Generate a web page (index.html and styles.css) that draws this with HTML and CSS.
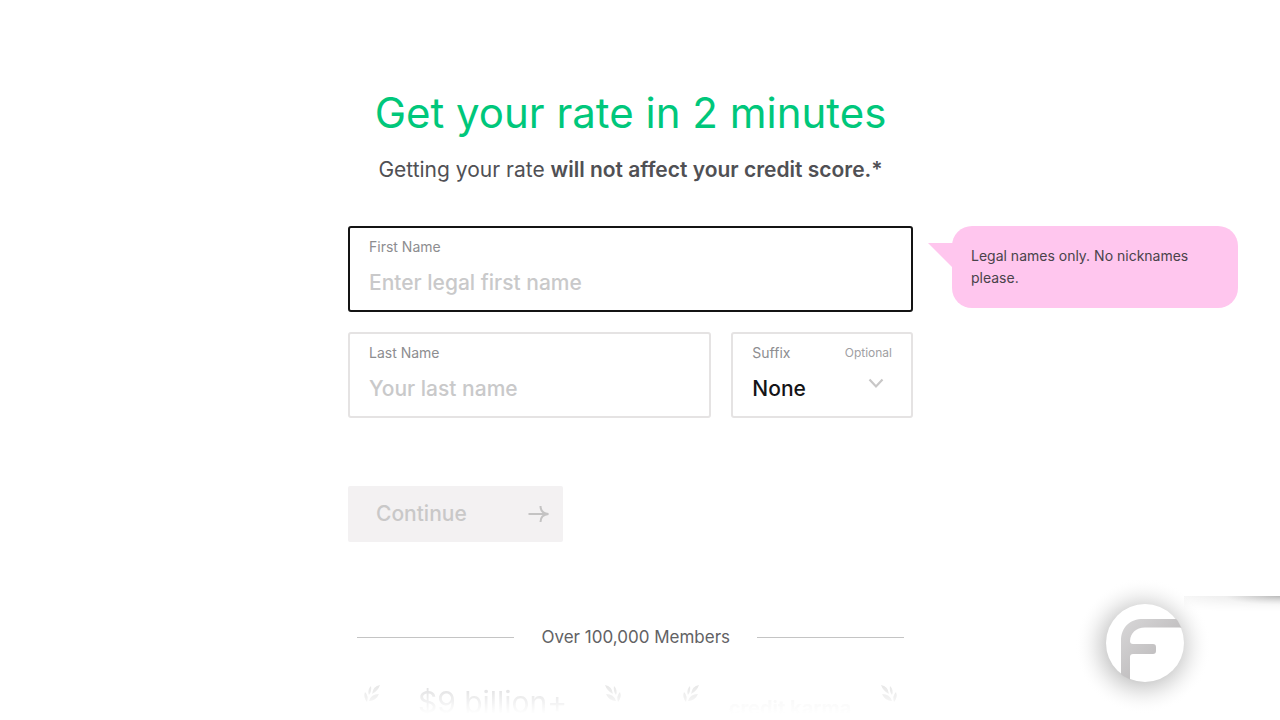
FILE: index.html
```html
<!DOCTYPE html>
<html lang="en">
<head>
<meta charset="utf-8">
<meta name="viewport" content="width=device-width, initial-scale=1">
<title>Get your rate in 2 minutes</title>
<link rel="stylesheet" href="styles.css">
</head>
<body>
<main class="page">
  <header class="intro">
    <h1 class="title">Get your rate in 2 minutes</h1>
    <p class="subtitle">Getting your rate <strong>will not affect your credit score.*</strong></p>
  </header>

  <form class="form">
    <div class="field field-active">
      <label class="field-label" for="first-name">First Name</label>
      <input class="field-input" id="first-name" type="text" placeholder="Enter legal first name">
    </div>
    <div class="row">
      <div class="field">
        <label class="field-label" for="last-name">Last Name</label>
        <input class="field-input" id="last-name" type="text" placeholder="Your last name">
      </div>
      <div class="field field-suffix">
        <div class="label-row">
          <label class="field-label" for="suffix">Suffix</label>
          <span class="optional">Optional</span>
        </div>
        <div class="select-row">
          <select class="field-input field-select" id="suffix"><option>None</option></select>
          <svg class="chevron" viewBox="0 0 16 12" aria-hidden="true"><path d="M1.5 2.500 8 9.500 14.500 2.500"/></svg>
        </div>
      </div>
    </div>
    <button class="continue" type="button" disabled>
      <span>Continue</span>
      <svg class="arrow" viewBox="0 0 22 18" aria-hidden="true"><path d="M.5 9H20.500M12.500 1C12.500 5 15 8.500 20.500 9 15 9.500 12.500 13 12.500 17"/></svg>
    </button>
  </form>

  <aside class="bubble">Legal names only. No nicknames please.</aside>

  <section class="members">
    <h2 class="members-title">Over 100,000 Members</h2>
    <div class="stats">
      <div class="stat">
        <svg class="laurel" viewBox="0 0 18 20" aria-hidden="true"><path d="M17 1Q10 2 9 10 15 7 17 1M8 2Q4 6 6 11 9 7 8 2M2 8Q0 13 4 18 6 12 2 8M16 10Q8 10 6 17 13 17 16 10"/></svg>
        <span class="stat-value">$9 billion+</span>
        <svg class="laurel laurel-end" viewBox="0 0 18 20" aria-hidden="true"><path d="M17 1Q10 2 9 10 15 7 17 1M8 2Q4 6 6 11 9 7 8 2M2 8Q0 13 4 18 6 12 2 8M16 10Q8 10 6 17 13 17 16 10"/></svg>
      </div>
      <div class="stat">
        <svg class="laurel" viewBox="0 0 18 20" aria-hidden="true"><path d="M17 1Q10 2 9 10 15 7 17 1M8 2Q4 6 6 11 9 7 8 2M2 8Q0 13 4 18 6 12 2 8M16 10Q8 10 6 17 13 17 16 10"/></svg>
        <span class="stat-partner">credit karma</span>
        <svg class="laurel laurel-end" viewBox="0 0 18 20" aria-hidden="true"><path d="M17 1Q10 2 9 10 15 7 17 1M8 2Q4 6 6 11 9 7 8 2M2 8Q0 13 4 18 6 12 2 8M16 10Q8 10 6 17 13 17 16 10"/></svg>
      </div>
    </div>
  </section>
</main>

<div class="edge-shadow"></div>
<svg class="badge" viewBox="0 0 140 140" role="img" aria-label="F logo">
  <defs>
    <radialGradient id="halo">
      <stop offset="0" stop-color="#aaa" stop-opacity=".8"/>
      <stop offset=".52" stop-color="#aaa" stop-opacity=".55"/>
      <stop offset=".75" stop-color="#bbb" stop-opacity=".2"/>
      <stop offset="1" stop-color="#fff" stop-opacity="0"/>
    </radialGradient>
    <linearGradient id="mark" x1="0" y1="0" x2="1" y2="1">
      <stop offset="0" stop-color="#d8d7d8"/>
      <stop offset=".6" stop-color="#bfbdbe"/>
      <stop offset="1" stop-color="#d4d3d4"/>
    </linearGradient>
    <clipPath id="disc"><circle cx="70" cy="68" r="39.500"/></clipPath>
  </defs>
  <circle cx="68" cy="71" r="68" fill="url(#halo)"/>
  <circle cx="70" cy="68" r="39" fill="#fff"/>
  <path clip-path="url(#disc)" fill="url(#mark)" d="M46 110V66C46 52 55 44 68 44H112V55Q108 52.500 104 52.500H70C61 52.500 55.500 58 55 66Q55 69 58 69H78Q81 69 81 72V76Q81 79 78 79H58Q55 79 55 82V110Z"/>
</svg>
</body>
</html>
```
FILE: styles.css
```css
* { box-sizing: border-box; }

body {
  margin: 0;
  min-height: 100vh;
  background: #fff;
  color: #505054;
  font-family: Inter, "Liberation Sans", sans-serif;
  overflow: hidden;
}

.page {
  display: grid;
  grid-template-columns: 1fr minmax(0, 565px) 1fr;
  padding: 88px 19px 0 0;
}

.intro, .form, .members { grid-column: 2; }

.intro { text-align: center; margin-bottom: 42px; }

.title {
  margin: 0 0 18px;
  color: #00c77b;
  font-size: 42px;
  font-weight: 400;
  line-height: 50px;
  white-space: nowrap;
}

.subtitle {
  margin: 0;
  font-size: 21px;
  line-height: 28px;
  white-space: nowrap;
}

.subtitle strong { font-weight: 600; }

.form {
  display: flex;
  flex-direction: column;
  gap: 20px;
}

.row {
  display: grid;
  grid-template-columns: 2fr 1fr;
  gap: 20px;
}

.field {
  display: flex;
  flex-direction: column;
  min-width: 0;
  height: 86px;
  padding: 10px 19px;
  border: 2px solid #e5e3e3;
  border-radius: 3px;
}

.field-active { border-color: #141414; }

.label-row, .select-row {
  display: flex;
  align-items: center;
  justify-content: space-between;
}

.field-label { color: #8d8d90; font-size: 14px; line-height: 18px; }
.optional { color: #a0a0a3; font-size: 12px; line-height: 18px; }

.field-input {
  width: 100%;
  min-width: 0;
  height: 28px;
  margin-top: 13px;
  padding: 0;
  border: 0;
  outline: 0;
  background: transparent;
  color: #141416;
  font: 500 21px/28px Inter, "Liberation Sans", sans-serif;
}

.field-input::placeholder { color: #c9c9ca; opacity: 1; }
.field-select { appearance: none; }

.chevron {
  flex: none;
  width: 16px;
  height: 12px;
  margin-right: 8px;
  fill: none;
  stroke: #c8c7c7;
  stroke-width: 2.2;
}

.continue {
  display: flex;
  align-items: center;
  justify-content: space-between;
  width: 215px;
  height: 56px;
  margin-top: 48px;
  padding: 0 13px 0 28px;
  border: 0;
  border-radius: 2px;
  background: #f3f1f2;
  color: #c9c8c8;
  font: 500 21px/28px Inter, "Liberation Sans", sans-serif;
}

.arrow {
  width: 22px;
  height: 18px;
  fill: none;
  stroke: #c4c3c3;
  stroke-width: 2;
}

.bubble {
  position: relative;
  align-self: start;
  grid-column: 3;
  max-width: 286px;
  min-height: 81px;
  margin-left: 39px;
  margin-right: -19px;
  padding: 19px;
  border-radius: 20px;
  background: #ffc6ee;
  color: #49434a;
  font-size: 14px;
  line-height: 22px;
}

.bubble::before {
  content: "";
  position: absolute;
  top: 17px;
  left: -24px;
  width: 25px;
  height: 25px;
  background: #ffc6ee;
  clip-path: polygon(0 0, 100% 0, 100% 100%);
}

.members { padding: 83px 9px 0; }

.members-title {
  display: flex;
  align-items: center;
  gap: 27px;
  margin: 0;
  color: #626264;
  font-size: 17px;
  font-weight: 400;
  line-height: 24px;
}

.members-title::before, .members-title::after {
  content: "";
  flex: 15;
  height: 1px;
  background: #c4c4c4;
}

.members-title::after { flex-grow: 14; }

.stats {
  display: grid;
  grid-template-columns: 6fr 5fr;
  gap: 60px;
  height: 35px;
  padding: 0 6px;
  margin-top: 35px;
  overflow: hidden;
  mask-image: linear-gradient(#000 0, transparent 30px);
}

.stat { display: flex; justify-content: space-between; color: #dededf; }
.stat-value { font-size: 30px; line-height: 36px; }
.stat-partner {
  padding-top: 12px;
  color: #f1f1f1;
  font-size: 20px;
  font-weight: 700;
  line-height: 24px;
}
.laurel { width: 18px; height: 20px; fill: #e6e6e6; }
.laurel-end { transform: scaleX(-1); }

.edge-shadow {
  position: absolute;
  top: 596px;
  right: 0;
  width: 96px;
  height: 16px;
  background: radial-gradient(ellipse at top right, #b8b8b8, #eee 40%, #fff 100%);
  mask-image: linear-gradient(#000, transparent);
}

.badge {
  position: absolute;
  right: 65px;
  bottom: 5px;
  width: 140px;
  height: 140px;
}
```
